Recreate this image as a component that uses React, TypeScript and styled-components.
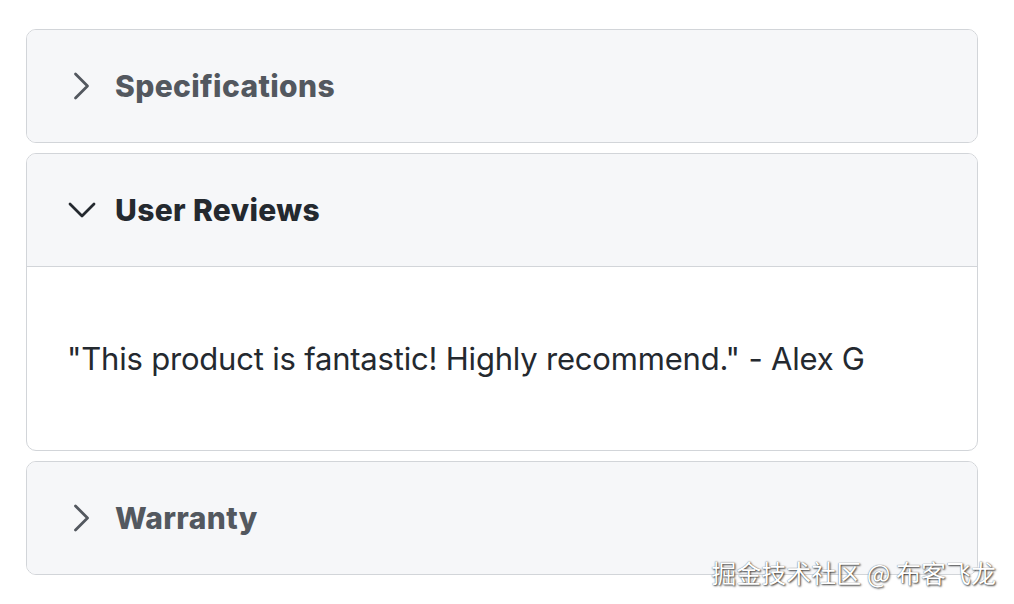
import React, { useState } from 'react';
import styled, { createGlobalStyle } from 'styled-components';

const GlobalStyle = createGlobalStyle`
    body {
        margin: 0;
        background: #ffffff;
        font-family: Inter, "Noto Sans", sans-serif;
    }
`

type Section = {
    title: string;
    content: string;
}

const sections: Section[] = [
    { title: 'Specifications', content: 'Weight: 1.2kg, Dimensions: 30 x 20 x 10 cm' },
    { title: 'User Reviews', content: '"This product is fantastic! Highly recommend." - Alex G' },
    { title: 'Warranty', content: '2 years limited warranty.' },
];

const Chevron = ({ open }: { open: boolean }) => (
    <svg width="28" height="28" viewBox="0 0 28 28" fill="none" stroke="currentColor"
        strokeWidth="2.8" strokeLinecap="round" strokeLinejoin="round">
        {open ? <path d="M2 8l12 12 12-12" /> : <path d="M7.5 2l12 12-12 12" />}
    </svg>
)

export default function App() {
    const [openIndex, setOpenIndex] = useState<number>(1);

    return (
        <Page>
            <GlobalStyle />
            <Accordion>
                {sections.map((s, i) => {
                    const open = i === openIndex;
                    return (
                        <Panel key={s.title}>
                            <Header open={open} onClick={() => setOpenIndex(open ? -1 : i)}>
                                <IconBox><Chevron open={open} /></IconBox>
                                <Title>{s.title}</Title>
                            </Header>
                            {open && <Body>{s.content}</Body>}
                        </Panel>
                    );
                })}
            </Accordion>
            <Watermark>掘金技术社区 @ 布客飞龙</Watermark>
        </Page>
    )
}

const Page = styled.div`
    position: relative;
    width: 1014px;
    height: 604px;
    box-sizing: border-box;
    padding: 29px 36px 0 26px;
`

const Accordion = styled.div`
    display: flex;
    flex-direction: column;
    gap: 10px;
`

const Panel = styled.div`
    border: 1.5px solid #d2d5d9;
    border-radius: 10px;
    overflow: hidden;
    background: #ffffff;
`

const Header = styled.div<{ open: boolean }>`
    display: flex;
    align-items: center;
    height: 112px;
    padding: 0 0 0 41px;
    background: #f6f7f9;
    cursor: pointer;
    border-bottom: ${p => (p.open ? '1.5px solid #d2d5d9' : 'none')};
    color: ${p => (p.open ? '#24292f' : '#53585f')};
`

const IconBox = styled.span`
    display: flex;
    width: 28px;
    height: 28px;
    margin-right: 19px;
`

const Title = styled.span`
    font-size: 30px;
    font-weight: 800;
    letter-spacing: 0.35px;
`

const Body = styled.div`
    padding: 72px 40px 71px;
    font-size: 31px;
    line-height: 40px;
    color: #24292f;
    letter-spacing: -0.2px;
`

const Watermark = styled.div`
    position: absolute;
    right: 18px;
    bottom: 14px;
    font-family: "Noto Sans CJK SC", sans-serif;
    font-size: 25px;
    color: #ffffff;
    text-shadow: 1px 1px 2px rgba(0, 0, 0, 0.75), 0 0 1px rgba(0, 0, 0, 0.6);
`
